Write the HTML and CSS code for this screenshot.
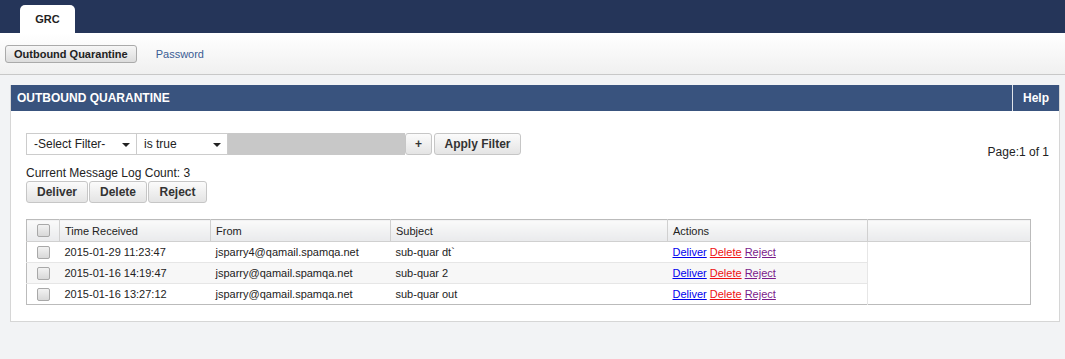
FILE: index.html
```html
<!DOCTYPE html>
<html lang="en">
<head>
  <meta charset="UTF-8">
  <title>GRC - Outbound Quarantine</title>
  <link rel="stylesheet" href="styles.css">
</head>
<body>
  <div class="topbar">
    <div class="tab">GRC</div>
  </div>
  <div class="subnav">
    <span class="subbtn">Outbound Quarantine</span>
    <a class="sublink" href="#">Password</a>
  </div>

  <div class="panel">
    <div class="panel-head">
      <div class="panel-title">OUTBOUND QUARANTINE</div>
      <div class="panel-help">Help</div>
    </div>
    <div class="panel-body">
      <div class="filter-row">
        <div class="filters">
          <div class="sel sel1">-Select Filter-<span class="caret"></span></div>
          <div class="sel sel2">is true<span class="caret"></span></div>
          <div class="textbox"></div>
          <button class="btn plus">+</button>
          <button class="btn apply">Apply Filter</button>
        </div>
        <div class="pager">Page:1 of 1</div>
      </div>
      <div class="count">Current Message Log Count: 3</div>
      <div class="actions">
        <button class="btn">Deliver</button>
        <button class="btn">Delete</button>
        <button class="btn">Reject</button>
      </div>

      <table class="grid">
        <thead>
          <tr>
            <th class="c-chk"><span class="chk"></span></th>
            <th class="c-time">Time Received</th>
            <th class="c-from">From</th>
            <th class="c-subj">Subject</th>
            <th class="c-act">Actions</th>
            <th class="c-pad"></th>
          </tr>
        </thead>
        <tbody>
          <tr>
            <td class="c-chk"><span class="chk"></span></td>
            <td>2015-01-29 11:23:47</td>
            <td>jsparry4@qamail.spamqa.net</td>
            <td>sub-quar dt`</td>
            <td class="links"><a class="l-deliver" href="#">Deliver</a> <a class="l-delete" href="#">Delete</a> <a class="l-reject" href="#">Reject</a></td>
            <td class="empty"></td>
          </tr>
          <tr class="alt">
            <td class="c-chk"><span class="chk"></span></td>
            <td>2015-01-16 14:19:47</td>
            <td>jsparry@qamail.spamqa.net</td>
            <td>sub-quar 2</td>
            <td class="links"><a class="l-deliver" href="#">Deliver</a> <a class="l-delete" href="#">Delete</a> <a class="l-reject" href="#">Reject</a></td>
            <td class="empty"></td>
          </tr>
          <tr>
            <td class="c-chk"><span class="chk"></span></td>
            <td>2015-01-16 13:27:12</td>
            <td>jsparry@qamail.spamqa.net</td>
            <td>sub-quar out</td>
            <td class="links"><a class="l-deliver" href="#">Deliver</a> <a class="l-delete" href="#">Delete</a> <a class="l-reject" href="#">Reject</a></td>
            <td class="empty"></td>
          </tr>
        </tbody>
      </table>
    </div>
  </div>
</body>
</html>
```

FILE: styles.css
```css
body { margin: 0; font-family: "Liberation Sans", Arial, sans-serif; font-size: 12px; color: #222; background: #f2f3f5; }

.topbar { height: 33px; background: #253559; display: flex; align-items: flex-end; padding-left: 20px; }
.tab { width: 55px; height: 28px; background: #fff; border-radius: 5px 5px 0 0; font-weight: bold; font-size: 11px; display: flex; align-items: center; justify-content: center; }

.subnav { height: 41px; background: linear-gradient(#fff, #f0f0f0); border-bottom: 1px solid #c8c8c8; display: flex; align-items: center; padding-left: 5px; gap: 19px; }
.subbtn { height: 16px; line-height: 16px; padding: 0 8px; border: 1px solid #aaa; border-radius: 3px; background: linear-gradient(#f6f6f6, #dcdcdc); font-weight: bold; font-size: 11px; margin-top: 1px; }
.sublink { font-size: 11px; color: #3a5c94; text-decoration: none; margin-top: 1px; }

.panel { margin: 10px 5px 0 10px; background: #fff; border: 1px solid #d6d6d6; border-top: 0; height: 236px; }
.panel-head { height: 26px; background: #39537e; color: #fff; display: flex; font-weight: bold; font-size: 12px; }
.panel-title { flex: 1; padding-left: 6px; line-height: 26px; }
.panel-help { width: 46px; border-left: 1px solid #e0e4ea; text-align: center; line-height: 26px; }

.panel-body { padding: 22px 10px 0 15px; }
.filter-row { display: flex; justify-content: space-between; align-items: flex-start; }
.filters { display: flex; height: 22px; }
.sel { border: 1px solid #ccc; background: #fff; font-size: 12px; line-height: 20px; padding-left: 7px; position: relative; box-sizing: border-box; height: 22px; }
.sel1 { width: 111px; }
.sel2 { width: 91px; border-left: 0; }
.caret { position: absolute; right: 6px; top: 9px; border: 4px solid transparent; border-top: 4px solid #222; border-bottom: 0; }
.textbox { width: 177px; height: 22px; background: #c8c8c8; }
.btn { font-family: inherit; font-size: 12px; font-weight: bold; color: #333; height: 22px; padding: 0; border: 1px solid #c6c6c6; border-radius: 3px; background: linear-gradient(#fbfbfb, #e4e4e4); margin: 0 1px 0 0; }
.plus { width: 27px; }
.apply { margin-left: 1px; width: 87px; }
.pager { font-size: 12px; margin-top: 12px; }

.count { margin-top: 7px; line-height: 15px; }
.actions { display: flex; }
.actions .btn:nth-child(1) { width: 62px; }
.actions .btn:nth-child(2) { width: 58px; }
.actions .btn:nth-child(3) { width: 59px; }

.grid { margin-top: 16px; width: 1005px; border-collapse: collapse; border: 1px solid #bbb; font-size: 11px; }
.grid th { height: 21px; background: linear-gradient(#fafafa, #e9eaec); font-weight: normal; text-align: left; padding: 0 5px; border-left: 1px solid #d0d0d0; border-bottom: 1px solid #d0d0d0; }
.grid td { height: 20px; padding: 0 5px; border-bottom: 1px solid #e6e6e6; }
.grid tr.alt td { background: #f7f7f7; }
.grid tr:last-child td { border-bottom: 0; }
.grid td.empty { background: #fff !important; border-left: 1px solid #e6e6e6; border-bottom: 0; }
.grid th.c-chk { border-left: 0; }
.c-chk { width: 22px; text-align: center !important; }
.c-time { width: 140px; }
.c-from { width: 169px; }
.c-subj { width: 266px; }
.c-act { width: 189px; }
.chk { display: inline-block; width: 11px; height: 11px; border: 1px solid #a8a8a8; border-radius: 2px; background: linear-gradient(#f2f2f2, #d8d8d8); vertical-align: middle; }
.links a { text-decoration: underline; }
.l-deliver { color: #0000ee; }
.l-delete { color: #ee1111; }
.l-reject { color: #7a1a8a; }
```
